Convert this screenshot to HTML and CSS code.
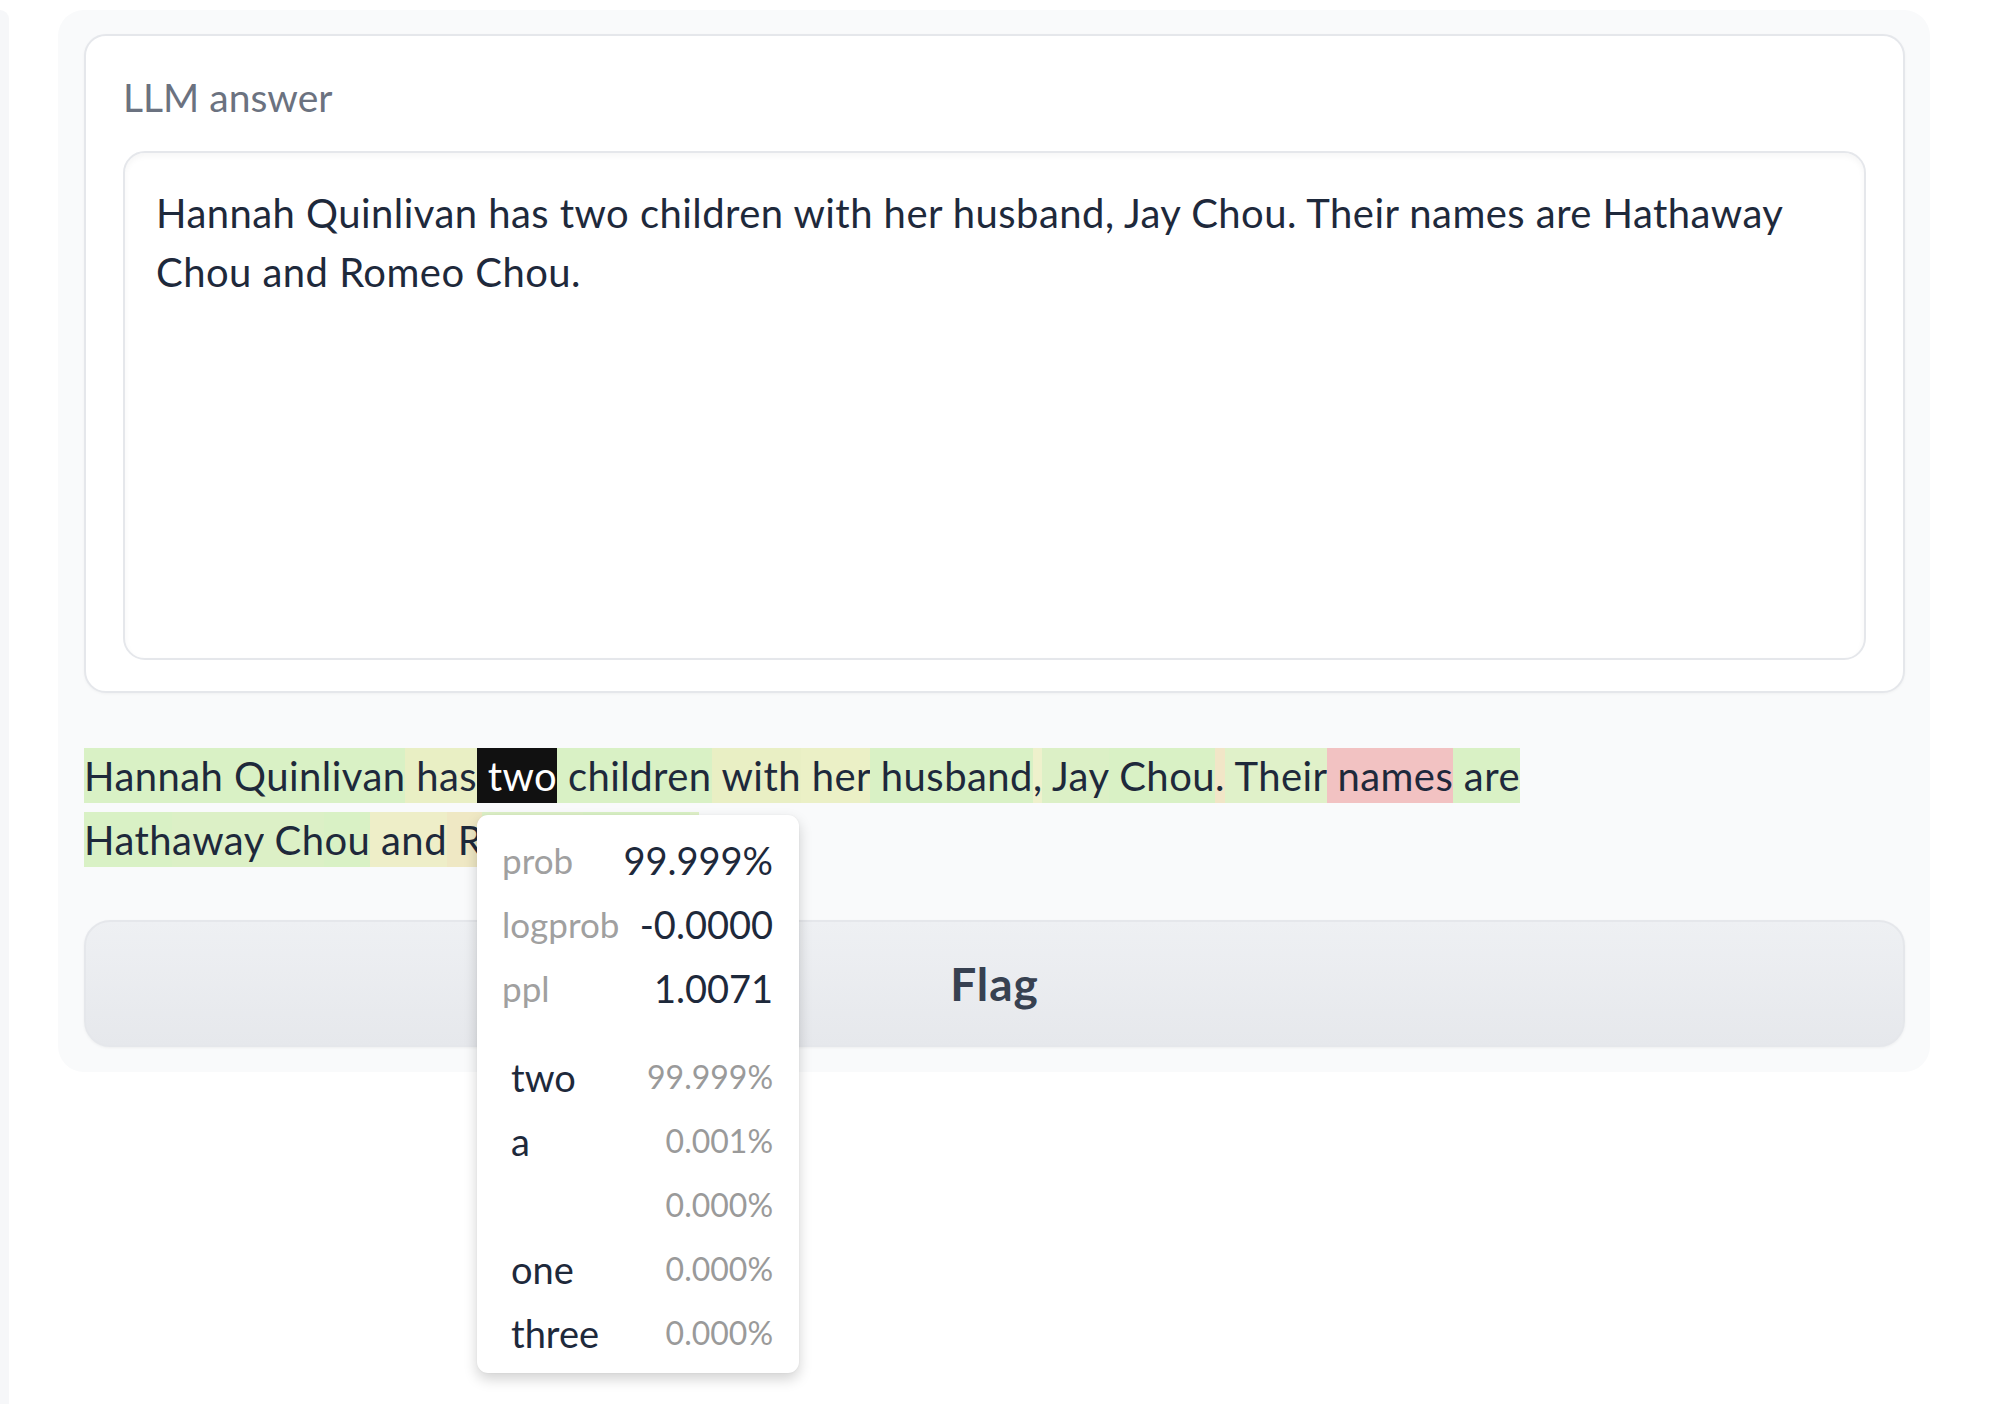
FILE: index.html
```html
<!DOCTYPE html>
<html lang="en">
<head>
<meta charset="utf-8">
<title>LLM answer</title>
<link rel="stylesheet" href="styles.css">
</head>
<body>
<div class="page">
  <div class="side-strip"></div>
  <div class="block">
    <div class="card">
      <div class="label">LLM answer</div>
      <div class="textarea">Hannah Quinlivan has two children with her husband, Jay Chou. Their names are Hathaway Chou and Romeo Chou.</div>
    </div>
    <div class="tokens"><span class="t g1">Hannah Quinlivan</span><span class="t y1"> has</span><span class="t sel"> two<span class="tip">
        <span class="grid top">
          <span class="k">prob</span><span class="v">99.999%</span>
          <span class="k">logprob</span><span class="v">-0.0000</span>
          <span class="k">ppl</span><span class="v">1.0071</span>
        </span>
        <span class="grid alt">
          <span class="w">two</span><span class="p">99.999%</span>
          <span class="w">a</span><span class="p">0.001%</span>
          <span class="w"></span><span class="p">0.000%</span>
          <span class="w">one</span><span class="p">0.000%</span>
          <span class="w">three</span><span class="p">0.000%</span>
        </span>
      </span></span><span class="t g1"> children</span><span class="t y1"> with</span><span class="t y2"> her</span><span class="t g1"> husband</span><span class="t y3">,</span><span class="t g2"> Jay</span><span class="t g1"> Chou</span><span class="t o1">.</span><span class="t g3"> Their</span><span class="t r1"> names</span><span class="t g1"> are</span><span class="t g1"> Hath</span><span class="t g2">away</span><span class="t g2"> Ch</span><span class="t g1">ou</span><span class="t y4"> and</span><span class="t o2"> R</span><span class="t g2">omeo</span><span class="t g1"> Chou</span><span class="t g3">.</span></div>
    <button class="flag">Flag</button>
  </div>
</div>
</body>
</html>
```

FILE: styles.css
```css
html, body {
  margin: 0;
  padding: 0;
  background: #ffffff;
}

body {
  font-family: Lato, "Noto Sans", sans-serif;
  color: #1f2937;
}

.page {
  display: flex;
  align-items: flex-start;
  height: 1404px;
  overflow: hidden;
}

.side-strip {
  width: 9px;
  height: 1394px;
  margin-top: 10px;
  background: #f6f7f9;
  border-top-right-radius: 18px;
  flex: none;
}

.block {
  margin-left: 49px;
  margin-top: 10px;
  width: 1872px;
  box-sizing: border-box;
  padding: 24px 25px 25px 26px;
  background: #f9fafb;
  border-radius: 26px;
  display: flex;
  flex-direction: column;
}

.card {
  background: #ffffff;
  border: 2px solid #e5e7eb;
  border-radius: 22px;
  padding: 37px 37px 31px 37px;
  box-shadow: 0 1px 3px rgba(0, 0, 0, 0.04);
}

.label {
  font-size: 39px;
  line-height: 48px;
  color: #6b7280;
  margin-bottom: 30px;
}

.textarea {
  height: 509px;
  box-sizing: border-box;
  border: 2px solid #e5e7eb;
  border-radius: 22px;
  padding: 31px 40px 0 31px;
  font-size: 40px;
  letter-spacing: 0.45px;
  line-height: 59px;
  color: #1e293b;
  box-shadow: inset 0 3px 6px rgba(0, 0, 0, 0.04);
}

.tokens {
  margin-top: 50px;
  margin-bottom: 49px;
  font-size: 40px;
  letter-spacing: 0.45px;
  line-height: 64px;
  color: #1e293b;
  padding-right: 330px;
}

.t {
  padding: 3.5px 0;
}

.g1 { background: #d9f1c5; }
.g2 { background: #dcf0c6; }
.g3 { background: #e0f1c9; }
.y1 { background: #e9efc4; }
.y2 { background: #ebf0c6; }
.y3 { background: #eef1cc; }
.y4 { background: #eeeec8; }
.o1 { background: #f1e6c7; }
.o2 { background: #efe8c4; }
.r1 { background: #f2c2c2; }

.sel {
  background: #111111;
  color: #ffffff;
  position: relative;
}

.tip {
  position: absolute;
  left: 0;
  top: calc(100% + 12px);
  width: 322px;
  box-sizing: border-box;
  padding: 13px 26px 8px 25px;
  background: #ffffff;
  border-radius: 11px;
  box-shadow: 0 6px 14px rgba(0, 0, 0, 0.18), 0 0 2px rgba(0, 0, 0, 0.06);
  display: flex;
  flex-direction: column;
  gap: 25px;
  color: #1e293b;
  letter-spacing: 0;
  white-space: nowrap;
  z-index: 5;
}

.grid {
  display: grid;
  grid-template-columns: auto 1fr;
  grid-auto-rows: 64px;
  align-items: center;
}

.k {
  font-size: 35px;
  color: #a0a0a0;
}

.v {
  font-size: 38px;
  text-align: right;
  color: #1e293b;
}

.w {
  font-size: 38px;
  padding-left: 9px;
  color: #1e293b;
}

.p {
  font-size: 32px;
  text-align: right;
  color: #9a9a9a;
}

.flag {
  height: 127px;
  border: 2px solid #e5e7eb;
  border-radius: 26px;
  background: linear-gradient(to bottom, #eef0f3, #e6e8ec);
  font-family: Lato, "Noto Sans", sans-serif;
  font-weight: 700;
  font-size: 46px;
  letter-spacing: 1px;
  color: #374151;
  box-shadow: 0 1px 3px rgba(0, 0, 0, 0.05);
  padding: 0;
}
```
